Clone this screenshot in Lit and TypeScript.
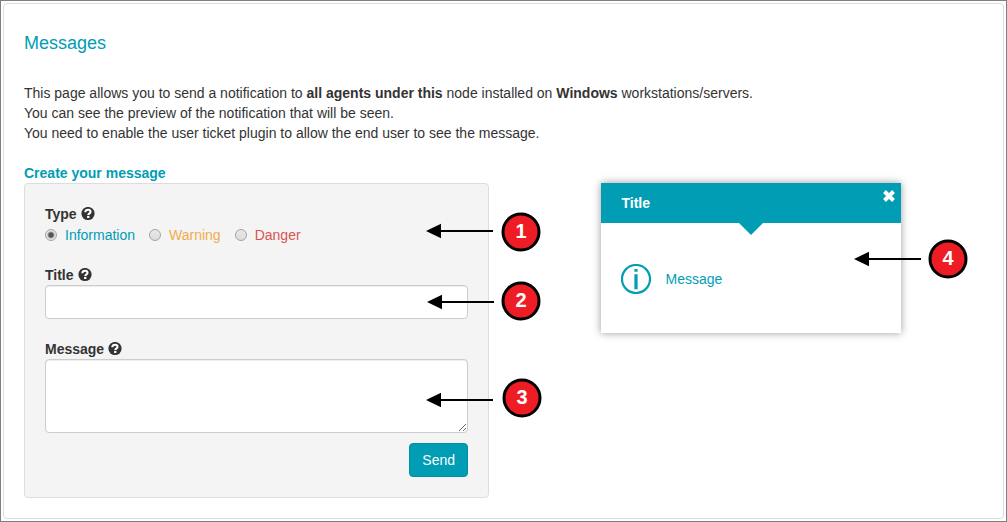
import { LitElement, html, css, svg } from "lit";
import { customElement, property, state } from "lit/decorators.js";
import { styleMap } from "lit/directives/style-map.js";

/** Numbered marker with an arrow that points to its left. */
@customElement("call-out")
class CallOut extends LitElement {
  @property({ type: Number }) number = 1;
  @property({ type: Number }) reach = 95;
  @property({ type: Number }) drop = 0;

  static styles = css`
    :host {
      position: absolute;
      display: block;
      pointer-events: none;
    }
    .drawing {
      display: block;
    }
    .digit {
      font: bold 20px "Liberation Sans", Arial, sans-serif;
      fill: #fff;
      text-anchor: middle;
    }
  `;

  render() {
    const tip = 100 - this.reach;
    const y = 20 + this.drop;
    return html`<svg class="drawing" width="120" height="40" viewBox="0 0 120 40">
      ${svg`
        <path d="M${tip + 10} ${y}H${tip + 67}" stroke="#000" stroke-width="2" />
        <path d="M${tip} ${y}L${tip + 15} ${y - 7.3}V${y + 7.3}Z" />
        <circle cx="100" cy="20" r="18" fill="#ee1c25" stroke="#000" stroke-width="3" />
        <text class="digit" x="100" y="26">${this.number}</text>
      `}
    </svg>`;
  }
}

const marks = [
  { number: 1, top: 28, right: -53, reach: 95, drop: -1 },
  { number: 2, top: 97, right: -53, reach: 94, drop: 1 },
  { number: 3, top: 194, right: -54, reach: 96, drop: 2 },
];

const types = [
  { id: "information", label: "Information" },
  { id: "warning", label: "Warning" },
  { id: "danger", label: "Danger" },
];

const px = (n: number) => `${n}px`;

@customElement("app-root")
class AppRoot extends LitElement {
  @state() private type = "information";

  static styles = css`
    :host {
      display: block;
      font: 14px/20px "Liberation Sans", Arial, sans-serif;
      color: #333;
    }
    * {
      box-sizing: border-box;
    }
    .frame {
      border: 1px solid #7f7f7f;
      padding: 2px;
      min-height: 100vh;
      background: #fff;
    }
    .panel {
      border: 1px solid #ddd;
      border-radius: 4px;
      padding: 20px;
    }
    .heading {
      margin: 9px 0 30px;
      font-size: 18px;
      font-weight: normal;
      color: #009db5;
    }
    .intro {
      margin: 0 0 20px;
    }
    .subheading {
      margin: 0;
      font-size: 14px;
      font-weight: bold;
      color: #009db5;
    }
    .columns {
      display: grid;
      grid-template-columns: 1fr 1fr;
      gap: 29px;
      align-items: start;
    }
    .well {
      position: relative;
      display: flex;
      flex-direction: column;
      gap: 20px;
      border: 1px solid #ddd;
      border-radius: 4px;
      padding: 20px;
      background: #f4f4f4;
    }
    .group {
      margin: 0;
      border: 0;
      padding: 0;
      min-width: 0;
    }
    .caption {
      display: flex;
      align-items: center;
      gap: 4px;
      padding: 0;
      font-weight: bold;
    }
    .help {
      display: block;
      width: 14px;
      height: 14px;
    }
    .choices {
      display: flex;
      gap: 14px;
      padding-top: 1px;
    }
    .choice {
      display: flex;
      align-items: center;
      gap: 8px;
    }
    .information {
      color: #009db5;
    }
    .warning {
      color: #f0ad4e;
    }
    .danger {
      color: #d9534f;
    }
    .radio {
      appearance: none;
      width: 12px;
      height: 12px;
      margin: 0;
      border: 1px solid #a3a3a3;
      border-radius: 50%;
      background: linear-gradient(#e9e9e9, #dcdcdc);
    }
    .radio:checked {
      background: radial-gradient(circle, #555 2px, #e4e4e4 4px);
    }
    .field {
      display: block;
      width: 100%;
      height: 34px;
      margin: 0;
      border: 1px solid #ccc;
      border-radius: 4px;
      padding: 6px 12px;
      background: #fff;
      box-shadow: inset 0 1px 1px rgba(0, 0, 0, 0.075);
      font: inherit;
      color: #555;
    }
    .area {
      height: 74px;
      resize: vertical;
    }
    .actions {
      display: flex;
      justify-content: flex-end;
      padding-top: 10px;
    }
    .send {
      height: 34px;
      border: 1px solid #008da3;
      border-radius: 4px;
      padding: 6px 12px;
      background: #009db5;
      color: #fff;
      font: inherit;
    }
    .card {
      position: relative;
      width: 300px;
      justify-self: center;
      background: #fff;
      box-shadow: 0 0 8px rgba(0, 0, 0, 0.4);
    }
    .card-head {
      position: relative;
      display: flex;
      justify-content: space-between;
      padding: 10px 5px 10px 21px;
      background: #009db5;
      color: #fff;
      font-weight: bold;
    }
    .notch {
      position: absolute;
      top: 100%;
      left: 50%;
      margin-left: -12px;
      border: 12px solid transparent;
      border-top-color: #009db5;
      border-bottom: 0;
    }
    .close {
      align-self: flex-start;
      margin-top: -4px;
      border: 0;
      padding: 0;
      background: none;
      color: inherit;
    }
    .glyph {
      display: block;
    }
    .card-body {
      display: flex;
      align-items: center;
      gap: 15px;
      min-height: 110px;
      padding: 22px 20px 20px;
    }
  `;

  private help() {
    return html`<svg class="help" viewBox="0 0 14 14" aria-hidden="true">
      <circle cx="7" cy="6.5" r="6.6" fill="#333" />
      <path
        d="M4.3 5.3C4.3 3.5 5.4 2.8 7.1 2.8S9.5 3.6 9.5 4.9C9.5 6.5 7.3 6.3 7.3 8.1"
        fill="none"
        stroke="#fff"
        stroke-width="2.1"
      />
      <path d="M6.1 8.9H8.4V11H6.1Z" fill="#fff" />
    </svg>`;
  }

  render() {
    return html`<main class="frame">
      <section class="panel">
        <h1 class="heading">Messages</h1>
        <p class="intro">
          This page allows you to send a notification to <b>all agents under this</b> node installed on
          <b>Windows</b> workstations/servers.<br />
          You can see the preview of the notification that will be seen.<br />
          You need to enable the user ticket plugin to allow the end user to see the message.
        </p>
        <h2 class="subheading">Create your message</h2>
        <div class="columns">
          <form class="well" @submit=${(e: Event) => e.preventDefault()}>
            <fieldset class="group">
              <legend class="caption">Type ${this.help()}</legend>
              <div class="choices">
                ${types.map(
                  (t) => html`<label class="choice ${t.id}">
                    <input
                      class="radio"
                      type="radio"
                      name="type"
                      .checked=${this.type === t.id}
                      @change=${() => (this.type = t.id)}
                    />${t.label}</label
                  >`
                )}
              </div>
            </fieldset>
            <div class="group">
              <label class="caption" for="title">Title ${this.help()}</label>
              <input class="field" id="title" type="text" />
            </div>
            <div class="group">
              <label class="caption" for="message">Message ${this.help()}</label>
              <textarea class="field area" id="message"></textarea>
              <div class="actions"><button class="send" type="submit">Send</button></div>
            </div>
            ${marks.map(
              (m) => html`<call-out
                .number=${m.number}
                .reach=${m.reach}
                .drop=${m.drop}
                style=${styleMap({ top: px(m.top), right: px(m.right) })}
              ></call-out>`
            )}
          </form>
          <aside class="card">
            <header class="card-head">
              Title
              <button class="close" type="button" aria-label="Close">
                <svg class="glyph" width="14" height="14" viewBox="0 0 14 14">
                  <path d="M2.5 2.5L11.5 11.5M11.5 2.5L2.5 11.5" stroke="#fff" stroke-width="4" />
                </svg>
              </button>
              <span class="notch"></span>
            </header>
            <div class="card-body information">
              <svg class="glyph" width="30" height="30" viewBox="0 0 30 30" aria-hidden="true">
                <circle cx="15" cy="15" r="14" fill="none" stroke="#009db5" stroke-width="2.2" />
                <path d="M13.4 5H16.6V7.8H13.4ZM13.4 10.2H16.6V25.2H13.4Z" fill="#009db5" />
              </svg>
              Message
            </div>
            <call-out
              .number=${4}
              .reach=${94}
              style=${styleMap({ top: px(56), right: px(-67) })}
            ></call-out>
          </aside>
        </div>
      </section>
    </main>`;
  }
}
